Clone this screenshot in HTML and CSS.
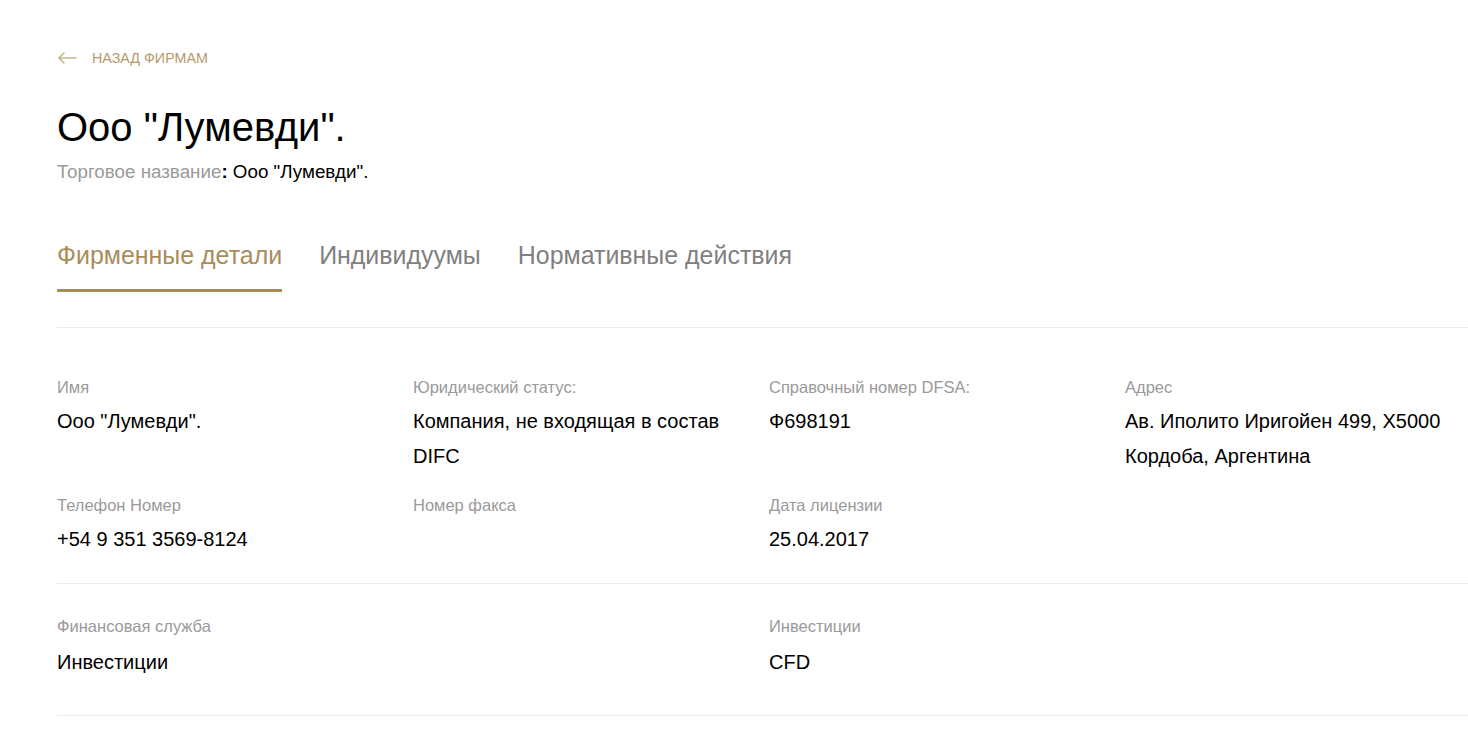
FILE: index.html
```html
<!DOCTYPE html>
<html lang="ru">
<head>
<meta charset="utf-8">
<title>Ооо "Лумевди".</title>
<link rel="stylesheet" href="styles.css">
</head>
<body>
<div class="page">
  <a class="back" href="#">
    <svg class="back-icon" width="20" height="12" viewBox="0 0 20 12" aria-hidden="true">
      <path d="M19 6H2M7 1L2 6l5 5" fill="none" stroke="currentColor" stroke-width="1.6" stroke-linecap="round" stroke-linejoin="round"/>
    </svg>
    <span>Назад фирмам</span>
  </a>

  <h1 class="title">Ооо "Лумевди".</h1>
  <p class="subtitle"><span class="sub-label">Торговое название</span><span class="sub-colon">:</span><span class="sub-value"> Ооо "Лумевди".</span></p>

  <nav class="tabs">
    <a class="tab active" href="#">Фирменные детали</a>
    <a class="tab" href="#">Индивидуумы</a>
    <a class="tab" href="#">Нормативные действия</a>
  </nav>

  <section class="details first">
    <div class="field">
      <div class="label">Имя</div>
      <div class="value">Ооо "Лумевди".</div>
    </div>
    <div class="field">
      <div class="label">Юридический статус:</div>
      <div class="value">Компания, не входящая в состав DIFC</div>
    </div>
    <div class="field">
      <div class="label">Справочный номер DFSA:</div>
      <div class="value">Ф698191</div>
    </div>
    <div class="field">
      <div class="label">Адрес</div>
      <div class="value">Ав. Иполито Иригойен 499, X5000 Кордоба, Аргентина</div>
    </div>
    <div class="field">
      <div class="label">Телефон Номер</div>
      <div class="value">+54 9 351 3569-8124</div>
    </div>
    <div class="field">
      <div class="label">Номер факса</div>
      <div class="value"></div>
    </div>
    <div class="field">
      <div class="label">Дата лицензии</div>
      <div class="value">25.04.2017</div>
    </div>
  </section>

  <section class="details second">
    <div class="field wide">
      <div class="label">Финансовая служба</div>
      <div class="value">Инвестиции</div>
    </div>
    <div class="field wide">
      <div class="label">Инвестиции</div>
      <div class="value">CFD</div>
    </div>
  </section>
</div>
</body>
</html>
```

FILE: styles.css
```css
html, body {
  margin: 0;
  padding: 0;
  background: #ffffff;
  overflow-x: hidden;
}

body {
  font-family: "Liberation Sans", Arial, sans-serif;
  color: #000000;
}

.page {
  width: 1424px;
  padding: 50px 0 40px 57px;
}

.back {
  display: flex;
  align-items: center;
  gap: 15px;
  height: 16px;
  color: #b59b6a;
  text-decoration: none;
  font-size: 14.3px;
  line-height: 16px;
  text-transform: uppercase;
}

.back-icon {
  display: block;
  color: #c9b48e;
}

.title {
  margin: 37px 0 0;
  font-size: 40px;
  line-height: 48px;
  font-weight: normal;
}

.subtitle {
  margin: 9px 0 0;
  font-size: 18.8px;
  line-height: 24px;
}

.sub-label {
  color: #9a9a9a;
}

.sub-colon {
  color: #000000;
  font-weight: bold;
}

.sub-value {
  color: #000000;
}

.tabs {
  display: flex;
  gap: 37px;
  margin-top: 56px;
}

.tab {
  font-size: 24.95px;
  line-height: 30px;
  padding-bottom: 19px;
  color: #808080;
  text-decoration: none;
  border-bottom: 3px solid transparent;
}

.tab.active {
  color: #a88c5a;
  border-bottom-color: #a88c5a;
}

.details {
  display: grid;
  grid-template-columns: repeat(4, 356px);
  row-gap: 21px;
  border-top: 1px solid #ececec;
}

.details.first {
  margin-top: 35px;
  padding: 49px 0 26px;
}

.details.second {
  padding: 32px 0 35px;
  border-bottom: 1px solid #ececec;
}

.field {
  padding-right: 24px;
}

.field.wide {
  grid-column: span 2;
}

.label {
  font-size: 16.5px;
  line-height: 20px;
  color: #9a9a9a;
  margin-bottom: 7px;
}

.field.wide .label {
  margin-bottom: 9px;
}

.value {
  font-size: 20px;
  line-height: 35px;
  color: #000000;
}
```
